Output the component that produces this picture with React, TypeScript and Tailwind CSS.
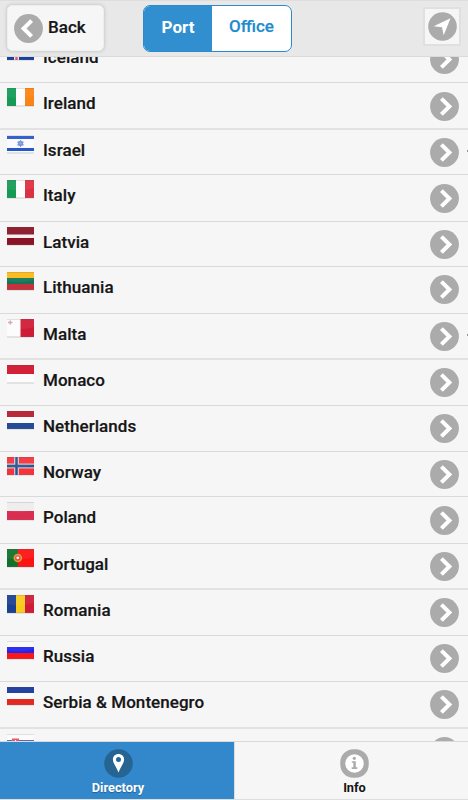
import React from "react";

type Country = {
  name: string;
  height: string;
  flag: React.ReactNode;
  tick?: boolean;
  thick?: boolean;
  low?: boolean;
};

const horizontal = (a: string, b: string, c: string) => (
  <>
    <rect width="27" height="6" fill={a} />
    <rect y="6" width="27" height="6" fill={b} />
    <rect y="12" width="27" height="6" fill={c} />
  </>
);

const vertical = (a: string, b: string, c: string) => (
  <>
    <rect width="9" height="18" fill={a} />
    <rect x="9" width="9" height="18" fill={b} />
    <rect x="18" width="9" height="18" fill={c} />
  </>
);

const countries: Country[] = [
  {
    name: "Iceland",
    height: "h-[46px]",
    flag: (
      <>
        <rect width="27" height="18" fill="#183f9c" />
        <path d="M9.5 0v18M0 9h27" stroke="#e9eaf5" strokeWidth="5" />
        <path d="M9.5 0v18M0 9h27" stroke="#ed5560" strokeWidth="2.4" />
      </>
    ),
  },
  { name: "Ireland", height: "h-[46px]", low: true, flag: vertical("#159b55", "#fdfdfd", "#fb8414") },
  {
    name: "Israel",
    height: "h-[46px]",
    tick: true,
    thick: true,
    flag: (
      <>
        <rect width="27" height="18" fill="#fafafc" />
        <path d="M0 2.5h27M0 14.5h27" stroke="#2858c8" strokeWidth="2.8" />
        <path d="M13.5 5.3l2.8 4.8h-5.6zM13.5 11.7l-2.8-4.8h5.6z" fill="#8ba8e8" stroke="#6388dc" strokeWidth=".9" />
      </>
    ),
  },
  { name: "Italy", height: "h-[47px]", low: true, flag: vertical("#169b55", "#fdfdfd", "#dc3043") },
  {
    name: "Latvia",
    height: "h-[45px]",
    flag: (
      <>
        <rect width="27" height="18" fill="#8a1426" />
        <rect y="7.5" width="27" height="3.5" fill="#f7f1f2" />
      </>
    ),
  },
  { name: "Lithuania", height: "h-[47px]", flag: horizontal("#fbb916", "#147456", "#c5323e") },
  {
    name: "Malta",
    height: "h-[45px]",
    tick: true,
    flag: (
      <>
        <rect width="27" height="18" fill="#fcfcfc" />
        <rect x="13.5" width="13.5" height="18" fill="#cf1c36" />
        <path d="M1 3.5h4.5M3.3 1.5v4" stroke="#d5a9ab" strokeWidth="1.5" />
      </>
    ),
  },
  {
    name: "Monaco",
    height: "h-[47px]",
    thick: true,
    flag: (
      <>
        <rect width="27" height="18" fill="#fcfcfc" />
        <rect width="27" height="9" fill="#d1142d" />
      </>
    ),
  },
  { name: "Netherlands", height: "h-[46px]", flag: horizontal("#b41d2d", "#fbfbfb", "#254c94") },
  {
    name: "Norway",
    height: "h-[45px]",
    flag: (
      <>
        <rect width="27" height="18" fill="#f3343b" />
        <path d="M9.5 0v18M0 9h27" stroke="#d5bfce" strokeWidth="5" />
        <path d="M9.5 0v18M0 9h27" stroke="#25558f" strokeWidth="2.4" />
      </>
    ),
  },
  {
    name: "Poland",
    height: "h-[47px]",
    low: true,
    flag: (
      <>
        <rect width="27" height="18" fill="#ededed" />
        <rect y="9" width="27" height="9" fill="#d92e50" />
      </>
    ),
  },
  {
    name: "Portugal",
    height: "h-[45px]",
    flag: (
      <>
        <rect width="27" height="18" fill="#fc1414" />
        <rect width="10.8" height="18" fill="#13702b" />
        <circle cx="10.8" cy="9" r="4.3" fill="#d89b32" />
        <circle cx="10.8" cy="9" r="2.7" fill="#e64642" />
        <circle cx="10.8" cy="8.8" r="1.4" fill="#fff" />
      </>
    ),
  },
  { name: "Romania", height: "h-[47px]", thick: true, flag: vertical("#1c3f91", "#f9cb1b", "#cf1b38") },
  { name: "Russia", height: "h-[46px]", flag: horizontal("#fafafa", "#2424ee", "#fa1717") },
  { name: "Serbia & Montenegro", height: "h-[46px]", flag: horizontal("#17389c", "#fcfcfc", "#e32a20") },
  {
    name: "Slovakia",
    height: "h-[46px]",
    thick: true,
    flag: (
      <>
        {horizontal("#fbfbfb", "#4a68b5", "#e32b36")}
        <path d="M5 4.5h7v7l-3.5 3-3.5-3z" fill="#e8505a" />
        <path d="M8.5 6v6M6.5 8h4" stroke="#fff" />
      </>
    ),
  },
];

function Flag({ children }: { children: React.ReactNode }) {
  return (
    <svg className="mt-[5px] ml-[7px] h-[19px] w-[27px] shrink-0" viewBox="0 0 27 19">
      <rect width="27" height="18.6" fill="#d5d5d5" />
      {children}
      <path d="M0 .5h27" stroke="#777" strokeOpacity=".2" />
      <path d="M0 17.5h27" stroke="#777" strokeOpacity=".18" />
      <path d="M0 9Q14 12 27 8V1H0Z" fill="#fff" fillOpacity=".06" />
    </svg>
  );
}

function Chevron({ back = false }: { back?: boolean }) {
  return (
    <svg className="size-[29px] shrink-0" viewBox="0 0 29 29">
      <circle cx="14.5" cy="14.5" r="14.4" fill="#ababab" />
      <path
        d={back ? "M17.6 6.6L9.6 14.5L17.6 22.4" : "M11.4 6.6L19.4 14.5L11.4 22.4"}
        fill="none"
        stroke="#fff"
        strokeWidth="4"
      />
    </svg>
  );
}

function Row({ name, height, flag, tick, thick, low }: Country) {
  return (
    <li
      className={`flex shrink-0 items-start ${thick ? "border-t-2 border-[#e2e2e2]" : "border-t border-[#dadada]"} ${height}`}
    >
      <Flag>{flag}</Flag>
      <span className="mt-[8px] ml-[9px] grow text-[17px] leading-[24px] font-medium tracking-[0.05px] [-webkit-text-stroke:0.2px_#161616]">
        {name}
      </span>
      <span className={`mr-[9px] ${low ? "mt-[9px]" : "mt-[8px]"}`}>
        <Chevron />
      </span>
      {tick && <span className="mt-[20px] -ml-px h-[2px] w-px bg-[#999]" />}
    </li>
  );
}

export default function App() {
  return (
    <div className="flex h-[800px] w-[468px] flex-col overflow-hidden bg-[#f6f6f6] font-['Roboto',sans-serif] text-[#161616]">
      <header className="flex h-[57px] shrink-0 items-start border-t border-b border-t-[#dedede] border-b-[#dadada] bg-[#e8e8e8] pt-[4px]">
        <button className="ml-[7px] flex h-[46px] w-[97px] items-center rounded-[5px] border border-[#eeeeee] bg-[#f6f6f6] pl-[6px] shadow-[0_0_3px_1px_#cccccc]">
          <Chevron back />
          <span className="ml-[5px] -mt-[3px] text-[17px] leading-[24px] font-medium [-webkit-text-stroke:0.2px_#161616]">
            Back
          </span>
        </button>
        <div className="ml-[39px] flex h-[47px] w-[149px] overflow-hidden rounded-[7px] border border-[#2b8bcb] bg-white text-[17px]">
          <button className="w-[68px] bg-[#318fd0] pb-[3px] leading-[42px] font-bold text-white">Port</button>
          <button className="grow pb-[4px] leading-[41px] font-medium text-[#218bce] [-webkit-text-stroke:0.2px_#218bce]">
            Office
          </button>
        </div>
        <button className="mt-[2px] ml-[131px] flex h-[39px] w-[38px] items-center justify-center border-2 border-[#e0e0e0] bg-[#f6f6f6]">
          <svg className="size-[29px] shrink-0" viewBox="0 0 29 29">
            <circle cx="14.5" cy="14.5" r="14.3" fill="#ababab" />
            <path d="M22.5 6.2L5.7 14.2L14 15.2L15.7 23.3Z" fill="#fff" />
          </svg>
        </button>
      </header>

      <main className="min-h-0 flex-1 overflow-hidden">
        <ul className="-mt-[21px] flex flex-col">
          {countries.map((country) => (
            <Row key={country.name} {...country} />
          ))}
        </ul>
      </main>

      <footer className="flex h-[59px] shrink-0 border-t border-b border-t-[#d9d9d9] border-b-[#dddddd] text-[12.8px] leading-[15px] font-bold">
        <button className="flex w-[234px] flex-col items-center bg-[#3388cc] pt-[7px] pl-[2px] text-white [text-shadow:0_1px_1px_#23628f]">
          <svg className="size-[29px] shrink-0" viewBox="0 0 29 29">
            <circle cx="14.5" cy="14.5" r="14.3" fill="#266593" />
            <path
              fillRule="evenodd"
              d="M14.5 5.1c-3.4 0-5.6 2.4-5.6 5.5 0 3.7 3.7 7.5 5.6 12.9 1.9-5.4 5.6-9.2 5.6-12.9 0-3.1-2.2-5.5-5.6-5.5Zm0 3a2.5 2.5 0 1 1 0 5 2.5 2.5 0 0 1 0-5Z"
              fill="#fff"
            />
          </svg>
          <span className="mt-[2px]">Directory</span>
        </button>
        <button className="flex w-[234px] flex-col items-center border-l border-[#dddddd] pt-[7px] pl-[6px]">
          <svg className="size-[29px] shrink-0" viewBox="0 0 29 29">
            <rect x=".3" y=".3" width="28.4" height="28.4" rx="13" fill="#ababab" />
            <circle cx="14.5" cy="14.5" r="9.3" fill="#fff" />
            <circle cx="14.3" cy="9.3" r="1.6" fill="#ababab" />
            <path d="M11.8 12.2h4v6.1h1.5v1.6h-5.6v-1.6h1.6v-4.5h-1.5z" fill="#ababab" />
          </svg>
          <span className="mt-[2px]">Info</span>
        </button>
      </footer>
    </div>
  );
}
